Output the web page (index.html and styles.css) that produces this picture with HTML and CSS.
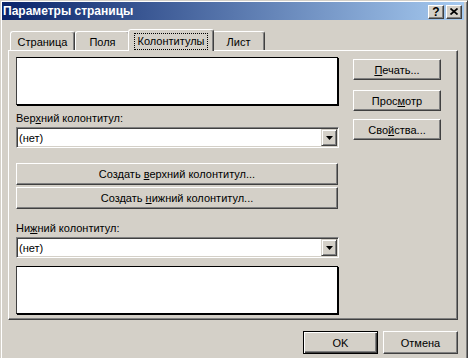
FILE: index.html
```html
<!DOCTYPE html>
<html lang="ru">
<head>
  <meta charset="UTF-8">
  <meta name="viewport" content="width=device-width, initial-scale=1.0">
  <title>Параметры страницы</title>
  <link rel="stylesheet" href="styles.css">
</head>
<body>
  <div class="window">
    <div class="titlebar">
      <span class="title">Параметры страницы</span>
      <div class="caption-buttons">
        <span class="cap-btn">?</span>
        <span class="cap-btn">
          <svg width="8" height="7" viewBox="0 0 8 7"><path d="M0.5 0.5L7.5 6.5M7.5 0.5L0.5 6.5" stroke="#000" stroke-width="1.7" fill="none"/></svg>
        </span>
      </div>
    </div>

    <div class="dialog">
      <div class="tabs">
        <div class="tab tab-page">Страница</div>
        <div class="tab tab-margins">Поля</div>
        <div class="tab tab-header active"><span class="focus">Колонтитулы</span></div>
        <div class="tab tab-sheet">Лист</div>
      </div>

      <div class="panel">
        <div class="left-col">
          <div class="preview"></div>
          <label class="field-label">Вер<u>х</u>ний колонтитул:</label>
          <div class="combo">
            <span class="combo-text">(нет)</span>
            <span class="combo-btn">
              <svg width="7" height="4" viewBox="0 0 7 4"><polygon points="0,0 7,0 3.5,4" fill="#000"/></svg>
            </span>
          </div>
          <button class="btn wide first">Создать <u>в</u>ерхний колонтитул...</button>
          <button class="btn wide">Создать <u>н</u>ижний колонтитул...</button>
          <label class="field-label second">Ни<u>ж</u>ний колонтитул:</label>
          <div class="combo">
            <span class="combo-text">(нет)</span>
            <span class="combo-btn">
              <svg width="7" height="4" viewBox="0 0 7 4"><polygon points="0,0 7,0 3.5,4" fill="#000"/></svg>
            </span>
          </div>
          <div class="preview footer-preview"></div>
        </div>

        <div class="right-col">
          <button class="btn side print"><u>П</u>ечать...</button>
          <button class="btn side preview-btn">Прос<u>м</u>отр</button>
          <button class="btn side props">Сво<u>й</u>ства...</button>
        </div>
      </div>

      <div class="actions">
        <button class="btn action default">OK</button>
        <button class="btn action">Отмена</button>
      </div>
    </div>
  </div>
</body>
</html>
```

FILE: styles.css
```css
body {
  margin: 0;
  background-color: #d4d0c8;
  font-family: "Liberation Sans", Arial, sans-serif;
  font-size: 11px;
  color: #000;
  overflow: hidden;
}

.window {
  width: 468px;
  height: 372px;
  box-sizing: border-box;
  border: 1px solid;
  border-color: #d4d0c8 #404040 #404040 #d4d0c8;
  box-shadow: inset 1px 1px #fff, inset -1px -1px #808080;
  padding: 1px 3px 0 1px;
  background-color: #d4d0c8;
}

/* title bar */
.titlebar {
  display: flex;
  align-items: center;
  height: 18px;
  padding: 0 2px 0 1px;
  background: linear-gradient(to right, #0a246a, #a6caf0);
}

.title {
  color: #fff;
  font-weight: bold;
  font-size: 12px;
}

.caption-buttons {
  display: flex;
  gap: 2px;
  margin-left: auto;
  margin-top: 1px;
}

.cap-btn {
  display: flex;
  align-items: center;
  justify-content: center;
  width: 16px;
  height: 14px;
  box-sizing: border-box;
  border: 1px solid;
  border-color: #fff #404040 #404040 #fff;
  box-shadow: inset -1px -1px #808080;
  background-color: #d4d0c8;
  font-weight: bold;
  font-size: 12px;
  line-height: 12px;
}

/* tabs */
.dialog {
  padding: 9px 6px 0 6px;
}

.tabs {
  display: flex;
  align-items: flex-end;
  height: 21px;
  padding-left: 2px;
}

.tab {
  height: 19px;
  box-sizing: border-box;
  padding-top: 4px;
  line-height: 13px;
  text-align: center;
  border-top: 1px solid #fff;
  border-left: 1px solid #fff;
  border-right: 1px solid #404040;
  border-radius: 3px 3px 0 0;
  box-shadow: inset -1px 0 #808080;
  background-color: #d4d0c8;
}

.tab-page { width: 65px; }
.tab-margins { width: 55px; }
.tab-header { width: 86px; }
.tab-sheet { width: 53px; }

.tab.active {
  position: relative;
  z-index: 1;
  height: 22px;
  padding-top: 3px;
  margin: 0 -2px -1px;
}

.focus {
  display: inline-block;
  padding: 1px 3px;
  border: 1px dotted #000;
  line-height: 13px;
}

/* panel */
.panel {
  display: flex;
  height: 270px;
  box-sizing: border-box;
  padding: 6px 0 0 7px;
  border: 1px solid;
  border-color: #fff #404040 #404040 #fff;
  box-shadow: inset -1px -1px #808080;
}

.left-col {
  display: flex;
  flex-direction: column;
  width: 323px;
}

.preview {
  width: 322px;
  height: 48px;
  box-sizing: border-box;
  background-color: #fff;
  border: 1px solid #000;
  border-left-color: #404040;
  box-shadow: 1px 1px 0 #000;
}

.footer-preview {
  margin-top: 8px;
}

.field-label {
  display: block;
  line-height: 13px;
  margin: 7px 0 2px;
}

.field-label.second {
  margin-top: 13px;
}

.combo {
  display: flex;
  align-items: center;
  height: 21px;
  box-sizing: border-box;
  padding: 1px;
  border: 1px solid;
  border-color: #808080 #fff #fff #808080;
  box-shadow: inset 1px 1px #404040, inset -1px -1px #d4d0c8;
  background-color: #fff;
}

.combo-text {
  padding-left: 1px;
}

.combo-btn {
  display: flex;
  align-items: center;
  justify-content: center;
  width: 16px;
  height: 17px;
  margin-left: auto;
  box-sizing: border-box;
  border: 1px solid;
  border-color: #d4d0c8 #404040 #404040 #d4d0c8;
  box-shadow: inset 1px 1px #fff, inset -1px -1px #808080;
  background-color: #d4d0c8;
}

/* buttons */
.btn {
  display: block;
  box-sizing: border-box;
  padding: 0;
  font-family: inherit;
  font-size: 11px;
  color: #000;
  background-color: #d4d0c8;
  border: 1px solid;
  border-color: #fff #404040 #404040 #fff;
  box-shadow: inset -1px -1px #808080;
}

.btn.wide {
  width: 322px;
  height: 22px;
  margin-top: 2px;
}

.btn.wide.first {
  margin-top: 15px;
}

.right-col {
  display: flex;
  flex-direction: column;
  margin-left: 14px;
}

.btn.side {
  width: 88px;
  height: 21px;
}

.btn.print { margin-top: 2px; }
.btn.preview-btn { margin-top: 10px; }
.btn.props { margin-top: 8px; }

.actions {
  display: flex;
  justify-content: flex-end;
  gap: 5px;
  margin-top: 11px;
}

.btn.action {
  width: 75px;
  height: 23px;
}

.btn.default {
  border-color: #000;
  box-shadow: inset 1px 1px #fff, inset -1px -1px #404040, inset -2px -2px #808080;
}
```
